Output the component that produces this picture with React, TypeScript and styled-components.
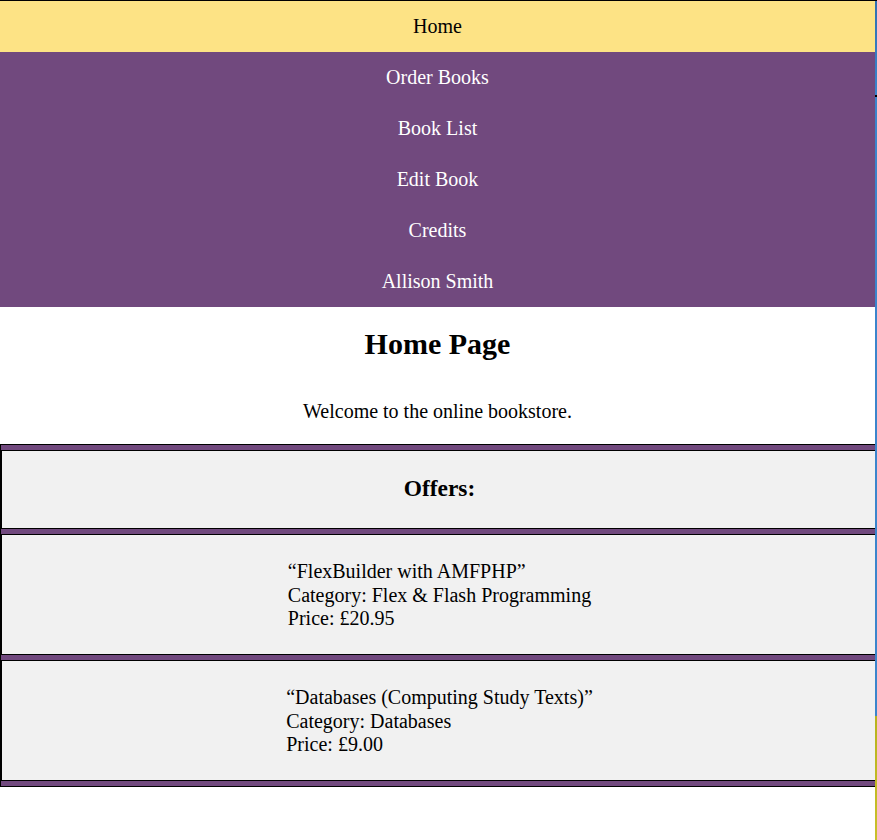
import React from "react";
import styled, { createGlobalStyle } from "styled-components";

const Global = createGlobalStyle`
  html, body { margin: 0; padding: 0; background: #ffffff; }
  body {
    font-family: "Liberation Serif", "Times New Roman", serif;
    font-size: 20px;
    color: #000;
  }
`;

const Shell = styled.div`
  display: flex;
  width: 877px;
  min-height: 840px;
  border-top: 1px solid #000;
  box-sizing: border-box;
`;

const Page = styled.div`
  width: 875px;
  overflow: hidden;
`;

const Edge = styled.div`
  width: 2px;
  background: linear-gradient(
    to bottom,
    #2f6fb0 0px,
    #3b85cc 94px,
    #000 94px,
    #000 96px,
    #3b85cc 96px,
    #3b85cc 715px,
    #b7b31d 715px,
    #c9c02a 100%
  );
`;

const Nav = styled.nav`
  display: flex;
  flex-direction: column;
  background: #71497e;
`;

const NavItem = styled.a<{ $active?: boolean }>`
  display: block;
  height: 51px;
  line-height: 51px;
  text-align: center;
  font-size: 20px;
  text-decoration: none;
  color: ${(p) => (p.$active ? "#000" : "#fff")};
  background: ${(p) => (p.$active ? "#fde385" : "#71497e")};
`;

const Main = styled.main`
  display: flex;
  flex-direction: column;
  align-items: center;
`;

const Title = styled.h1`
  margin: 20px 0 0;
  font-size: 30px;
  line-height: 34px;
  font-weight: bold;
`;

const Welcome = styled.p`
  margin: 39px 0 21px;
  font-size: 20px;
  line-height: 23px;
`;

const Offers = styled.section`
  align-self: stretch;
  margin-right: -2px;
  display: flex;
  flex-direction: column;
  gap: 5px;
  padding: 5px 0;
  background: #71497e;
  border-top: 1px solid #000;
  border-bottom: 1px solid #000;
  border-left: 1px solid #000;
`;

const Card = styled.div<{ $head?: boolean }>`
  display: flex;
  justify-content: center;
  background: #f1f1f1;
  border-top: 1px solid #000;
  border-bottom: 1px solid #000;
  border-left: 1px solid #000;
  padding: ${(p) => (p.$head ? "24px 0 26px" : "25px 0 23.5px")};
`;

const OffersTitle = styled.h3`
  margin: 0;
  font-size: 23.4px;
  line-height: 27px;
  font-weight: bold;
`;

const Book = styled.div`
  text-align: left;
  font-size: 20px;
  line-height: 23.5px;
`;

const offers = [
  { title: "FlexBuilder with AMFPHP", category: "Flex & Flash Programming", price: "£20.95" },
  { title: "Databases (Computing Study Texts)", category: "Databases", price: "£9.00" },
];

export default function App() {
  return (
    <>
      <Global />
      <Shell>
        <Page>
          <Nav>
            <NavItem $active>Home</NavItem>
            <NavItem>Order Books</NavItem>
            <NavItem>Book List</NavItem>
            <NavItem>Edit Book</NavItem>
            <NavItem>Credits</NavItem>
            <NavItem>Allison Smith</NavItem>
          </Nav>
          <Main>
            <Title>Home Page</Title>
            <Welcome>Welcome to the online bookstore.</Welcome>
            <Offers>
              <Card $head>
                <OffersTitle>Offers:</OffersTitle>
              </Card>
              {offers.map((o) => (
                <Card key={o.title}>
                  <Book>
                    “{o.title}”
                    <br />
                    Category: {o.category}
                    <br />
                    Price: {o.price}
                  </Book>
                </Card>
              ))}
            </Offers>
          </Main>
        </Page>
        <Edge />
      </Shell>
    </>
  );
}
